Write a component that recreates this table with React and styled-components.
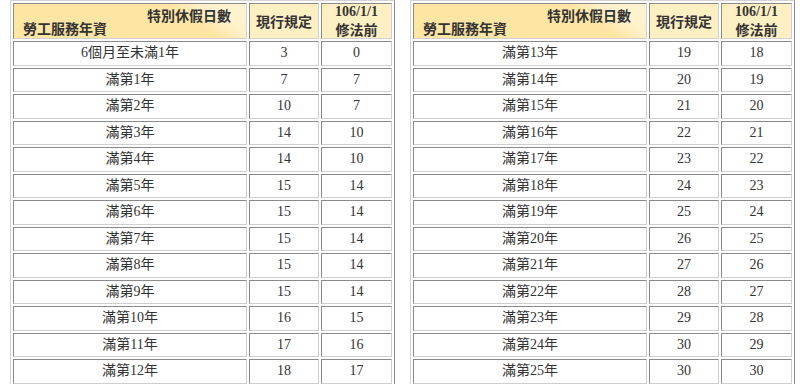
import React from "react";
import styled, { createGlobalStyle } from "styled-components";

const GlobalStyle = createGlobalStyle`
  body {
    margin: 0;
    background: #ffffff;
  }
`;

const Page = styled.div`
  display: flex;
  gap: 15px;
  padding-left: 10px;
  width: 800px;
  height: 384px;
  overflow: hidden;
  box-sizing: border-box;
`;

const Table = styled.table`
  width: 385px;
  table-layout: fixed;
  border-collapse: separate;
  border-spacing: 2px;
  border: 1px solid;
  border-color: #d4d4d4 #8a8a8a #8a8a8a #d4d4d4;
  color: #333333;
`;

const Cell = styled.td`
  box-sizing: border-box;
  border: 1px solid;
  border-color: #8a8a8a #cfcfcf #cfcfcf #8a8a8a;
  padding: 0;
  height: 24.5px;
  text-align: center;
  vertical-align: middle;
  font-family: "Liberation Serif", "Noto Sans CJK TC", serif;
  font-size: 14px;
  line-height: 16px;
`;

const HeadCell = styled.th`
  box-sizing: border-box;
  border: 1px solid;
  border-color: #8a8a8a #cfcfcf #cfcfcf #8a8a8a;
  padding: 0;
  height: 36px;
  background: #fff0c4;
  text-align: center;
  vertical-align: middle;
  font-family: "Noto Sans CJK TC", "Liberation Sans", sans-serif;
  font-weight: bold;
  font-size: 14px;
  line-height: 18px;
  color: #333333;
`;

const SplitCell = styled(HeadCell)`
  position: relative;
  background: linear-gradient(
    32deg,
    #fde5a4 0%,
    #fde5a4 72%,
    #fff1cb 84%,
    #fff3d2 100%
  );
`;

const TopRight = styled.span`
  position: absolute;
  top: 2px;
  right: 15px;
`;

const BottomLeft = styled.span`
  position: absolute;
  bottom: 1px;
  left: 9px;
`;

const DateLine = styled.div`
  font-family: "Liberation Serif", serif;
  font-size: 14px;
  line-height: 16px;
`;

const left = [
  ["6個月至未滿1年", 3, 0],
  ["滿第1年", 7, 7],
  ["滿第2年", 10, 7],
  ["滿第3年", 14, 10],
  ["滿第4年", 14, 10],
  ["滿第5年", 15, 14],
  ["滿第6年", 15, 14],
  ["滿第7年", 15, 14],
  ["滿第8年", 15, 14],
  ["滿第9年", 15, 14],
  ["滿第10年", 16, 15],
  ["滿第11年", 17, 16],
  ["滿第12年", 18, 17],
];

const right = [
  ["滿第13年", 19, 18],
  ["滿第14年", 20, 19],
  ["滿第15年", 21, 20],
  ["滿第16年", 22, 21],
  ["滿第17年", 23, 22],
  ["滿第18年", 24, 23],
  ["滿第19年", 25, 24],
  ["滿第20年", 26, 25],
  ["滿第21年", 27, 26],
  ["滿第22年", 28, 27],
  ["滿第23年", 29, 28],
  ["滿第24年", 30, 29],
  ["滿第25年", 30, 30],
];

const LeaveTable = ({ rows }) => (
  <Table>
    <colgroup>
      <col style={{ width: 234 }} />
      <col style={{ width: 70 }} />
      <col style={{ width: 71 }} />
    </colgroup>
    <thead>
      <tr>
        <SplitCell>
          <TopRight>特別休假日數</TopRight>
          <BottomLeft>勞工服務年資</BottomLeft>
        </SplitCell>
        <HeadCell>現行規定</HeadCell>
        <HeadCell>
          <DateLine>106/1/1</DateLine>
          修法前
        </HeadCell>
      </tr>
    </thead>
    <tbody>
      {rows.map(([label, now, before]) => (
        <tr key={label}>
          <Cell>{label}</Cell>
          <Cell>{now}</Cell>
          <Cell>{before}</Cell>
        </tr>
      ))}
    </tbody>
  </Table>
);

export default function App() {
  return (
    <>
      <GlobalStyle />
      <Page>
        <LeaveTable rows={left} />
        <LeaveTable rows={right} />
      </Page>
    </>
  );
}
